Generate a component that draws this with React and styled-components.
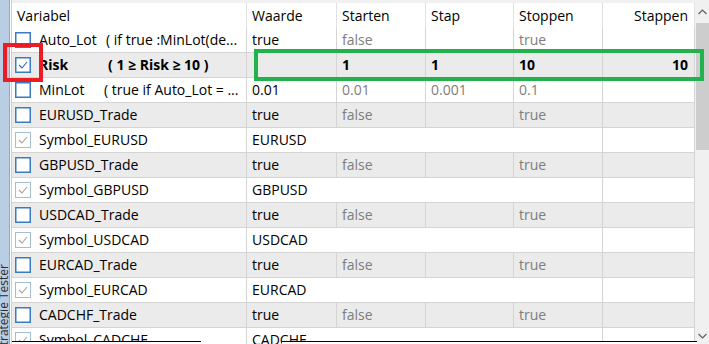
import React from 'react'
import styled, { createGlobalStyle } from 'styled-components'

const GlobalStyle = createGlobalStyle`
  html, body {
    margin: 0;
    padding: 0;
    background: #fff;
  }
  body {
    font-family: "Open Sans", "Liberation Sans", Arial, sans-serif;
    font-size: 14px;
  }
`

const COLS = '235px 90px 89px 88px 89px 92px'

const Page = styled.div`
  position: relative;
  width: 709px;
  height: 344px;
  overflow: hidden;
  display: flex;
  background: #fff;
`

const SideTab = styled.div`
  width: 9px;
  flex-shrink: 0;
  background: #b9cde5;
  border-right: 1px solid #8eaacb;
  overflow: hidden;
`

const TabLabel = styled.div`
  writing-mode: vertical-rl;
  transform: rotate(180deg);
  margin-top: 264px;
  margin-left: -5px;
  font-size: 12px;
  color: #2d2d2d;
  white-space: nowrap;
`

const Gutter = styled.div`
  width: 1px;
  flex-shrink: 0;
  background: #fff;
`

const Table = styled.div`
  flex: 1;
  display: flex;
  flex-direction: column;
  border-left: 1px solid #cfcfcf;
  min-height: 0;
`

const TopBand = styled.div`
  height: 3px;
  flex-shrink: 0;
  background: #f0f0f0;
`

const HeaderRow = styled.div`
  display: grid;
  grid-template-columns: ${COLS};
  height: 25px;
  flex-shrink: 0;
  background: #fff;
`

const HeaderCell = styled.div`
  box-sizing: border-box;
  border-right: 1px solid #e2e2e2;
  padding: 1px ${(p) => (p.$right ? '6px' : '5px')} 0 5px;
  line-height: 24px;
  text-align: ${(p) => (p.$right ? 'right' : 'left')};
  color: #000;
  white-space: nowrap;
`

const Row = styled.div`
  display: grid;
  grid-template-columns: ${COLS};
  height: 25px;
  flex-shrink: 0;
  box-sizing: border-box;
  border-bottom: 1px solid #d4d4d4;
  background: ${(p) => (p.$alt ? '#ebebeb' : '#fff')};
  font-weight: ${(p) => (p.$bold ? 'bold' : 'normal')};
`

const Cell = styled.div`
  box-sizing: border-box;
  border-right: 1px solid #d4d4d4;
  padding: 0 ${(p) => (p.$right ? '6px' : '5px')} 0 5px;
  line-height: 24px;
  color: ${(p) => (p.$muted ? '#7d7d7d' : '#000')};
  text-align: ${(p) => (p.$right ? 'right' : 'left')};
  grid-column: ${(p) => (p.$span ? `span ${p.$span}` : 'auto')};
  white-space: nowrap;
  overflow: hidden;
`

const NameCell = styled.div`
  box-sizing: border-box;
  border-right: 1px solid #d4d4d4;
  display: flex;
  align-items: center;
  padding-left: 3px;
  gap: 8px;
  line-height: 24px;
  white-space: nowrap;
  overflow: hidden;
`

const Name = styled.span`
  display: inline-block;
  width: ${(p) => (p.$w ? `${p.$w}px` : 'auto')};
  flex-shrink: 0;
`

const Comment = styled.span`
  color: #000;
`

const Box = styled.span`
  width: 16px;
  height: 16px;
  box-sizing: border-box;
  flex-shrink: 0;
  border: 1px solid ${(p) => (p.$state === 'dim' ? '#a6bcd4' : '#3a7cc2')};
  box-shadow: ${(p) => (p.$state === 'dim' ? 'none' : 'inset 0 0 0 0.5px #3a7cc2')};
  background: #fff;
  display: inline-flex;
  align-items: center;
  justify-content: center;
`

const Scrollbar = styled.div`
  width: 14px;
  flex-shrink: 0;
  background: #f0f0f0;
  display: flex;
  flex-direction: column;
`

const Arrow = styled.div`
  height: ${(p) => p.$h}px;
  display: flex;
  align-items: center;
  justify-content: center;
  flex-shrink: 0;
`

const Thumb = styled.div`
  height: 127px;
  margin-left: 1px;
  background: #cdcdcd;
  flex-shrink: 0;
`

const Track = styled.div`
  flex: 1;
`

const Cover = styled.div`
  position: absolute;
  top: 341px;
  left: ${(p) => p.$left}px;
  width: ${(p) => p.$w}px;
  height: 3px;
  box-sizing: border-box;
  background: #fff;
  border-top: 1px solid #000;
`

const Mark = styled.div`
  position: absolute;
  left: ${(p) => p.$left}px;
  top: ${(p) => p.$top}px;
  width: ${(p) => p.$w}px;
  height: ${(p) => p.$h}px;
  box-sizing: border-box;
  border: 4px solid ${(p) => p.$color};
  pointer-events: none;
`

const Check = ({ state }) => (
  <Box $state={state}>
    {state !== 'off' && (
      <svg width="12" height="12" viewBox="0 0 12 12">
        <polyline
          points="2,6 5,9 10,3"
          fill="none"
          stroke={state === 'dim' ? '#a3a3a3' : '#2f68a6'}
          strokeWidth="1.1"
        />
      </svg>
    )}
  </Box>
)

const Chevron = ({ up }) => (
  <svg width="9" height="6" viewBox="0 0 9 6">
    <polyline
      points={up ? '0.5,5 4.5,1 8.5,5' : '0.5,1 4.5,5 8.5,1'}
      fill="none"
      stroke="#606060"
      strokeWidth="1.2"
    />
  </svg>
)

const trade = (name) => ({
  name, check: 'off', values: ['true', 'false', '', 'true', ''],
})
const symbol = (name, val) => ({
  name, check: 'dim', symbol: val,
})

const rows = [
  { name: 'Auto_Lot', w: 59, comment: '( if true :MinLot(de...', check: 'off', values: ['true', 'false', '', 'true', ''] },
  { name: 'Risk', w: 61, comment: '( 1 ≥ Risk ≥ 10 )', check: 'on', bold: true, values: ['', '1', '1', '10', '10'] },
  { name: 'MinLot', w: 57, comment: '( true if Auto_Lot = ...', check: 'off', values: ['0.01', '0.01', '0.001', '0.1', ''] },
  trade('EURUSD_Trade'),
  symbol('Symbol_EURUSD', 'EURUSD'),
  trade('GBPUSD_Trade'),
  symbol('Symbol_GBPUSD', 'GBPUSD'),
  trade('USDCAD_Trade'),
  symbol('Symbol_USDCAD', 'USDCAD'),
  trade('EURCAD_Trade'),
  symbol('Symbol_EURCAD', 'EURCAD'),
  trade('CADCHF_Trade'),
  symbol('Symbol_CADCHF', 'CADCHF'),
]

const headers = ['Variabel', 'Waarde', 'Starten', 'Stap', 'Stoppen', 'Stappen']

const App = () => {
  return (
    <>
      <GlobalStyle />
      <Page>
        <SideTab>
          <TabLabel>Strategie Tester</TabLabel>
        </SideTab>
        <Gutter />
        <Table>
          <TopBand />
          <HeaderRow>
            {headers.map((h, i) => (
              <HeaderCell key={h} $right={i === 5}>{h}</HeaderCell>
            ))}
          </HeaderRow>
          {rows.map((r, i) => (
            <Row key={r.name} $alt={i % 2 === 1} $bold={r.bold}>
              <NameCell>
                <Check state={r.check} />
                <Name $w={r.w}>{r.name}</Name>
                {r.comment && <Comment>{r.comment}</Comment>}
              </NameCell>
              {r.symbol ? (
                <>
                  <Cell $span={4}>{r.symbol}</Cell>
                  <Cell />
                </>
              ) : (
                r.values.map((v, j) => (
                  <Cell
                    key={j}
                    $muted={!r.bold && j > 0}
                    $right={j === 4}
                  >
                    {v}
                  </Cell>
                ))
              )}
            </Row>
          ))}
        </Table>
        <Scrollbar>
          <Arrow $h={23}><Chevron up /></Arrow>
          <Thumb />
          <Track />
          <Arrow $h={17}><Chevron /></Arrow>
        </Scrollbar>

        <Cover $left={12} $w={189} />
        <Cover $left={282} $w={415} />
        <Mark $color="#ed1c24" $left={3} $top={43} $w={40} $h={39} />
        <Mark $color="#22b14c" $left={254} $top={49} $w={450} $h={32} />
      </Page>
    </>
  )
}

export default App
